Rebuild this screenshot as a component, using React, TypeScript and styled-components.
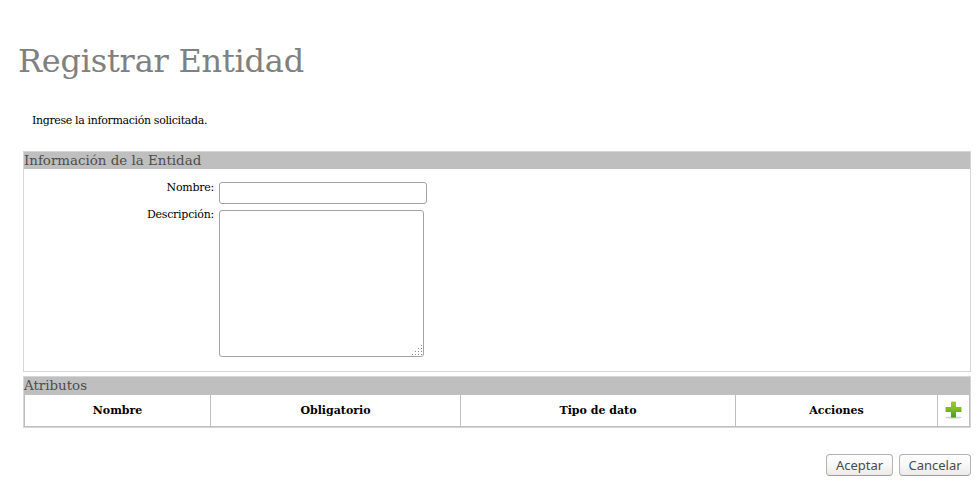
import React from "react";
import styled, { createGlobalStyle } from "styled-components";

const GlobalStyle = createGlobalStyle`
  * { box-sizing: border-box; }
  body {
    margin: 0;
    background: #fff;
    color: #000;
    font: 11px/14px "DejaVu Serif", serif;
    overflow: hidden;
  }
`;

const Page = styled.main`
  width: 980px;
  height: 502px;
  padding: 42px 9px 0 23px;
`;

const Title = styled.h1`
  margin: 0 0 0 -5px;
  height: 38px;
  color: #808080;
  font-size: 32px;
  font-weight: 400;
  line-height: 38px;
  letter-spacing: -0.24px;
  white-space: nowrap;
`;

const Intro = styled.p`
  margin: 34px 0 23px 9px;
  letter-spacing: -0.35px;
`;

const Panel = styled.section<{ $height: number }>`
  height: ${(p) => p.$height}px;
  margin-bottom: 4px;
  border: 1px solid #d3d7d7;
`;

const PanelHeader = styled.h2<{ $height: number }>`
  margin: 0;
  height: ${(p) => p.$height}px;
  background: #bfbfbf;
  color: #4d4d4d;
  font-size: 13.4px;
  font-weight: 400;
  line-height: 17px;
`;

const Form = styled.form`
  display: grid;
  grid-template-columns: 190px auto;
  justify-content: start;
  column-gap: 5px;
  row-gap: 6px;
  padding-top: 13px;
`;

const Label = styled.label<{ $lineHeight: number }>`
  text-align: right;
  line-height: ${(p) => p.$lineHeight}px;
  letter-spacing: -0.25px;
`;

const Input = styled.input`
  width: 208px;
  height: 22px;
  margin: 0;
  border: 1px solid #a5a3a0;
  border-radius: 3px;
  background: #fff;
  outline: none;
`;

const AreaFrame = styled.div`
  position: relative;
  width: 205px;
  height: 147px;
`;

const TextArea = styled.textarea`
  display: block;
  width: 100%;
  height: 100%;
  margin: 0;
  border: 1px solid #a5a3a0;
  border-radius: 3px;
  background: #fff;
  outline: none;
  resize: none;
`;

const Grip = styled.svg`
  position: absolute;
  right: 2px;
  bottom: 2px;
  pointer-events: none;
`;

const Table = styled.div`
  display: grid;
  grid-template-columns: 186px 250px 275px 202px 32px;
  height: 32px;
  border-bottom: 1px solid #bfbfbf;
  border-left: 1px solid #bfbfbf;
`;

const HeadCell = styled.div`
  display: flex;
  align-items: center;
  justify-content: center;
  border-right: 1px solid #bfbfbf;
  font-weight: 700;
`;

const AddButton = styled.button`
  display: block;
  width: 17px;
  height: 18px;
  margin-bottom: 1px;
  padding: 0;
  border: 0;
  background: none;
`;

const PlusSvg = styled.svg`
  display: block;
`;

const Actions = styled.div`
  display: flex;
  justify-content: flex-end;
  gap: 6px;
  margin-top: 26px;
`;

const Button = styled.button<{ $width: number }>`
  width: ${(p) => p.$width}px;
  height: 22px;
  padding: 0;
  border: 1px solid #b5b2af;
  border-bottom-color: #a09e9b;
  border-radius: 4px;
  background: linear-gradient(#fff, #f8f7f7 50%, #ebeae9);
  color: #4c4c4c;
  font: 13px/20px "Noto Sans", sans-serif;
`;

const gripDots = [
  [9, 0], [6, 3], [9, 3], [3, 6], [6, 6], [9, 6], [0, 9], [3, 9], [6, 9], [9, 9],
];

function PlusIcon() {
  return (
    <PlusSvg width="17" height="18" viewBox="0 0 17 18">
      <defs>
        <linearGradient id="plus" x1="0" y1="0" x2="0" y2="1">
          <stop offset="0" stopColor="#a2cc2b" />
          <stop offset="0.5" stopColor="#7fba20" />
          <stop offset="1" stopColor="#459a1c" />
        </linearGradient>
      </defs>
      <ellipse cx="8.5" cy="16.500" rx="8.200" ry="1" fill="#d0d0d0" />
      <path
        d="M6.800 0.500h3.400q.8 0 .8.800V6h4.700q.8 0 .8.800v3.400q0 .8-.8.800H11v4.700q0 .8-.8.800H6.800q-.8 0-.8-.8V11H1.300q-.8 0-.8-.8V6.800q0-.8.8-.8H6V1.300q0-.8.8-.8z"
        fill="url(#plus)"
      />
    </PlusSvg>
  );
}

export default function App() {
  return (
    <>
      <GlobalStyle />
      <Page>
        <Title>Registrar Entidad</Title>
        <Intro>Ingrese la información solicitada.</Intro>
        <Panel $height={221}>
          <PanelHeader $height={17}>Información de la Entidad</PanelHeader>
          <Form>
            <Label htmlFor="nombre" $lineHeight={12}>Nombre:</Label>
            <Input id="nombre" />
            <Label htmlFor="descripcion" $lineHeight={10}>Descripción:</Label>
            <AreaFrame>
              <TextArea id="descripcion" />
              <Grip width="10" height="10" fill="#8c8c8c" shapeRendering="crispEdges">
                {gripDots.map(([x, y]) => (
                  <rect key={`${x}-${y}`} x={x} y={y} width="1" height="1" />
                ))}
              </Grip>
            </AreaFrame>
          </Form>
        </Panel>
        <Panel $height={52}>
          <PanelHeader $height={18}>Atributos</PanelHeader>
          <Table>
            <HeadCell>Nombre</HeadCell>
            <HeadCell>Obligatorio</HeadCell>
            <HeadCell>Tipo de dato</HeadCell>
            <HeadCell>Acciones</HeadCell>
            <HeadCell>
              <AddButton type="button" aria-label="Agregar atributo">
                <PlusIcon />
              </AddButton>
            </HeadCell>
          </Table>
        </Panel>
        <Actions>
          <Button type="button" $width={67}>Aceptar</Button>
          <Button type="button" $width={72}>Cancelar</Button>
        </Actions>
      </Page>
    </>
  );
}
